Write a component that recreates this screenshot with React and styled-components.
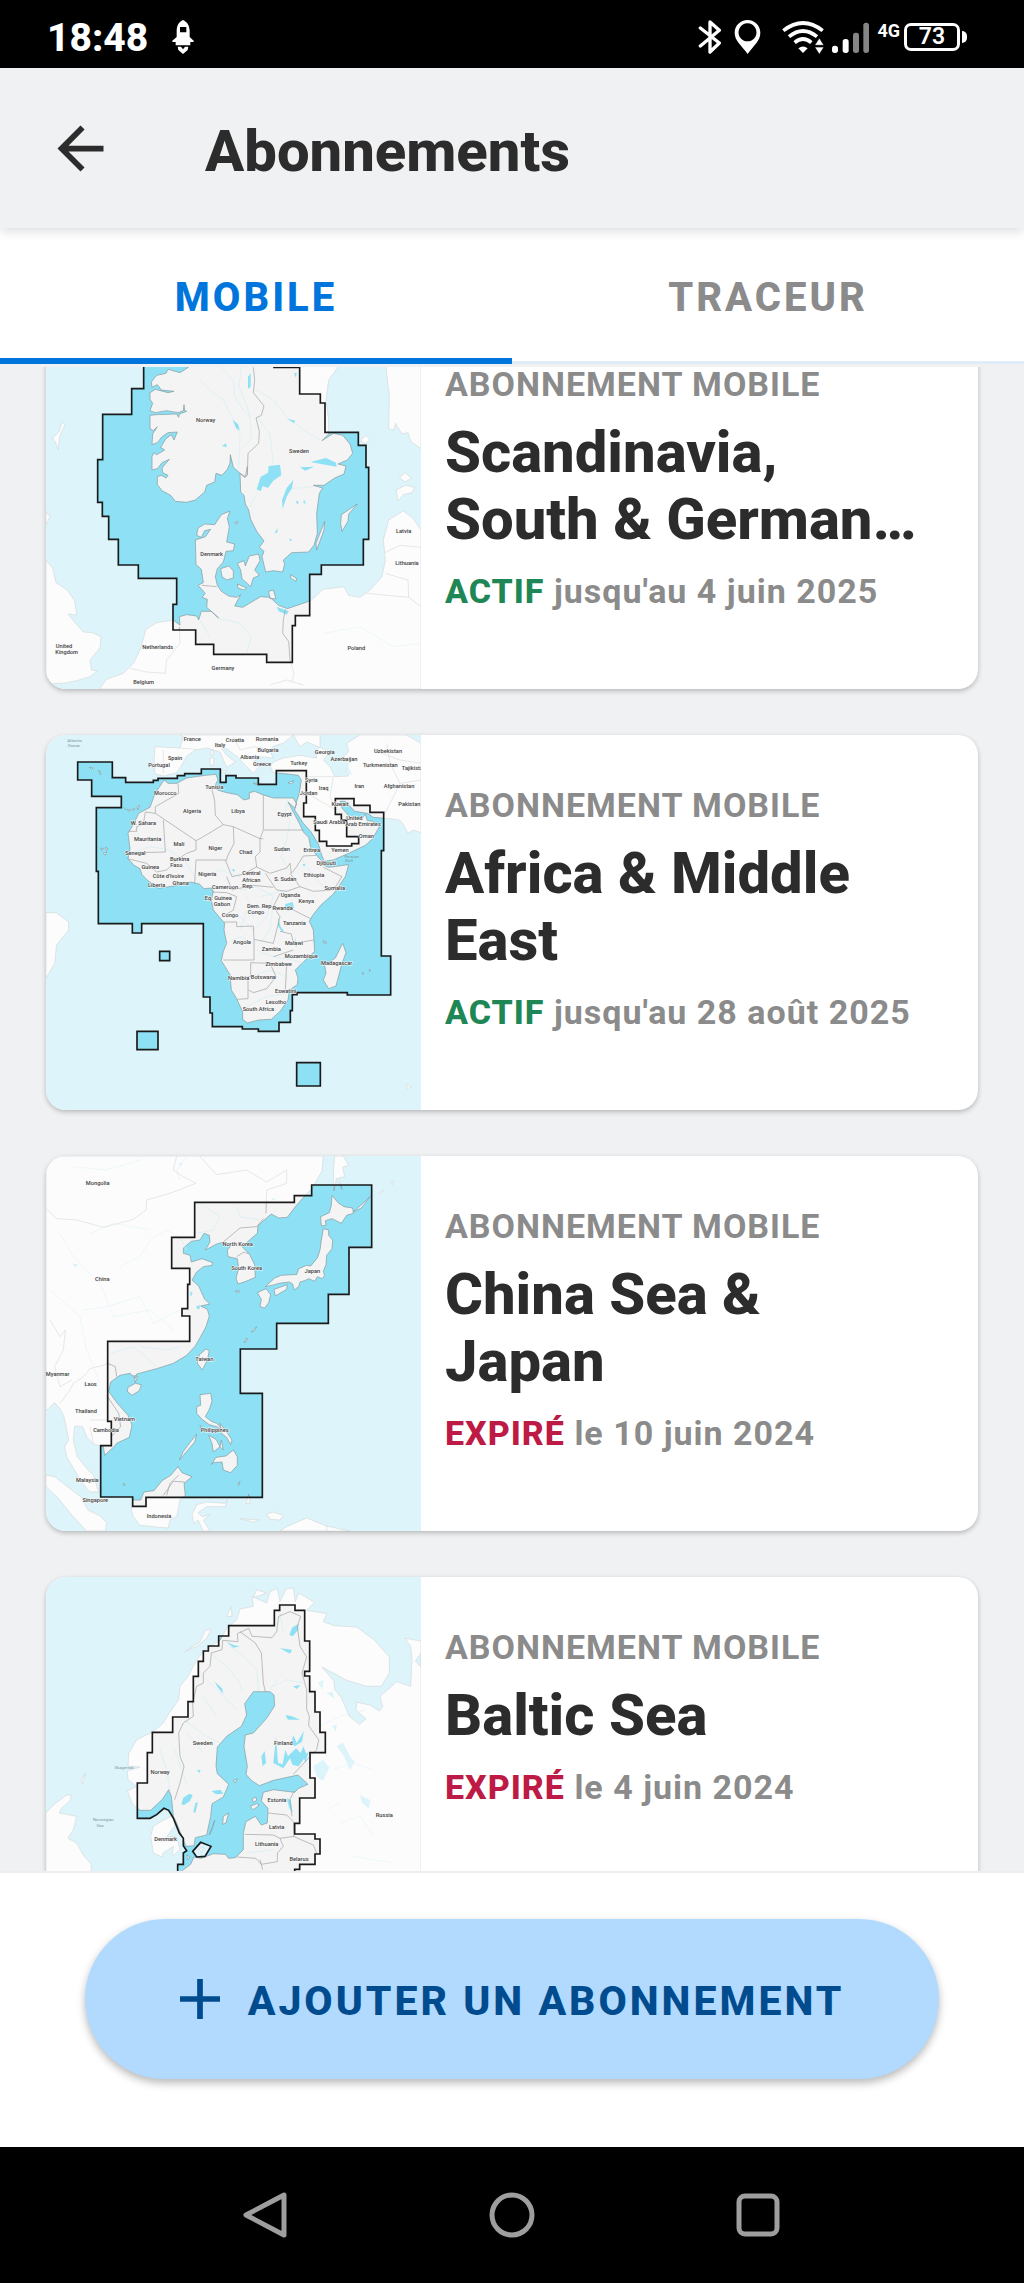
import React, { useLayoutEffect, useRef, useState } from "react";
import styled, { createGlobalStyle } from "styled-components";
import { MdArrowBack } from "react-icons/md";

const GlobalStyle = createGlobalStyle`
  * {
    box-sizing: border-box;
  }

  body {
    margin: 0;
    background: #f0f1f3;
    font-family: Roboto, "Noto Sans", sans-serif;
    color: #2c2c2c;
  }

  button {
    font: inherit;
    border: 0;
    padding: 0;
    background: none;
    cursor: pointer;
  }
`;

const Screen = styled.div`
  display: flex;
  flex-direction: column;
  height: 100vh;
`;

const StatusBar = styled.div`
  display: flex;
  flex: none;
  justify-content: space-between;
  align-items: center;
  height: 68px;
  padding: 6px 57px 0 47px;
  background: #000;
  color: #fff;

  svg {
    display: block;
    flex: none;
  }
`;

const StatusGroup = styled.div`
  display: flex;
  align-items: center;
  gap: ${(props) => props.$gap}px;
`;

const Time = styled.span`
  padding-top: 2px;
  font-size: 39px;
  line-height: 48px;
  font-weight: 800;
`;

const Network = styled.span`
  align-self: flex-start;
  font-size: 18px;
  line-height: 16px;
  font-weight: 700;
`;

const Battery = styled.div`
  display: flex;
  align-items: center;
  gap: 2px;
`;

const BatteryBody = styled.span`
  width: 56px;
  height: 28px;
  border: 3px solid #fff;
  border-radius: 7px;
  font-size: 23px;
  line-height: 22px;
  font-weight: 600;
  text-align: center;
`;

const BatteryTip = styled.span`
  width: 5px;
  height: 12px;
  border-radius: 0 6px 6px 0;
  background: #fff;
`;

const Header = styled.header`
  display: flex;
  flex: none;
  align-items: center;
  gap: 90px;
  height: 160px;
  padding: 0 46px;
  position: relative;
  background: #f0f1f3;
  box-shadow: 0 2px 12px rgba(0, 0, 0, 0.16);
`;

const BackButton = styled.button`
  color: #2c2c2c;

  svg {
    display: block;
  }
`;

const PageTitle = styled.h1`
  margin: 0;
  padding-top: 6px;
  font-size: 58px;
  line-height: 68px;
  font-weight: 800;
`;

const Tabs = styled.div`
  display: flex;
  flex: none;
  height: 136px;
  margin-bottom: 3px;
  background: #fff;
`;

const Tab = styled.button`
  flex: 1;
  padding-top: 2px;
  box-shadow: inset 0
    ${(props) => (props.$active ? "-6px #0076dd" : "-3px #e0edf8")};
  color: ${(props) => (props.$active ? "#0076dd" : "#8b8b8b")};
  font-size: 40px;
  font-weight: 800;
  letter-spacing: 3px;
`;

const List = styled.main`
  display: flex;
  flex: 1;
  flex-direction: column;
  gap: 46px;
  min-height: 0;
  padding: 46px;
  overflow-y: auto;
  scrollbar-width: none;
`;

const Card = styled.article`
  display: flex;
  flex: none;
  height: 375px;
  overflow: hidden;
  border-radius: 20px;
  background: #fff;
  box-shadow: 0 2px 5px rgba(0, 0, 0, 0.24);
`;

const MapPicture = styled.svg`
  display: block;
  flex: none;
  width: 375px;
  height: 375px;
  background: #ddf4fa;
`;

const MapLabel = styled.text`
  font-size: 17px;
  font-weight: 500;
  fill: #444;
  stroke: #f8f8f8;
  stroke-width: 3px;
  paint-order: stroke;
  text-anchor: middle;
`;

const SeaLabel = styled.text`
  font-size: 13px;
  fill: #7d959c;
  text-anchor: middle;
`;

const CardBody = styled.div`
  flex: 1;
  min-width: 0;
  padding: 50px 56px 0 24px;
`;

const Kind = styled.p`
  margin: 0 0 15px;
  color: #8b8b8b;
  font-size: 34px;
  line-height: 40px;
  font-weight: 700;
  letter-spacing: 1px;
  white-space: nowrap;
`;

const Name = styled.h2`
  margin: 0 0 18px;
  font-size: 58px;
  line-height: 67px;
  font-weight: 800;
`;

const Validity = styled.p`
  margin: 0;
  color: #8b8b8b;
  font-size: 34px;
  line-height: 40px;
  font-weight: 700;
  letter-spacing: 1px;
  white-space: nowrap;
`;

const State = styled.strong`
  color: ${(props) => (props.$expired ? "#bd1a45" : "#1f8656")};
  font-weight: 800;
`;

const Footer = styled.footer`
  flex: none;
  padding: 46px 85px 68px;
  border-top: 2px solid #eeeef2;
  background: #fff;
`;

const AddButton = styled.button`
  display: flex;
  justify-content: center;
  align-items: center;
  gap: 28px;
  width: 100%;
  height: 160px;
  border-radius: 80px;
  background: #b2daff;
  box-shadow: 0 4px 8px rgba(0, 0, 0, 0.28);
  color: #004c8f;
  font-size: 41px;
  font-weight: 800;
  letter-spacing: 3px;

  span {
    padding-top: 4px;
  }
`;

const NavBar = styled.nav`
  display: flex;
  flex: none;
  justify-content: center;
  align-items: center;
  height: 136px;
  background: #000;
`;

const NavButton = styled.button`
  flex: 0 0 24%;

  svg {
    display: block;
    margin: auto;
    fill: none;
    stroke: #9e9e9e;
    stroke-width: 5;
    stroke-linejoin: round;
  }
`;

// Each map is drawn on its own 1125 unit square.
const scandinavia = {
  viewBox: "18 -138 1125 1125",
  zone: "M311 -60V86H275V163H188V299H173V427H187V469H206V538H235V615H295V655H410V733H399V810H467V853H521V883H680V907H757V797H766V767H809V643H844V615H970V538H986V322H978V256H955V217H855V129H841V102H779V22H702V-60Z",
  land: [
    "M420 -138L405 10L445 22L420 38L384 28L378 40L350 46L334 66L336 82L352 74L364 90L402 94L384 98L346 88L330 98L330 118L338 130L330 152L346 158L380 152L414 158L430 152L432 134L434 152L440 154L418 162L416 172L410 162L350 164L330 166L330 206L340 212L352 200L338 222L336 254L352 248L366 230L384 218L412 216L402 240L394 224L378 236L362 262L374 270L350 284L342 278L336 290V330L352 326L366 308L388 298L366 324L368 338L384 346L378 354L364 346L352 350V374L366 392L392 406L406 424L440 427L466 420L494 396L500 376L524 366L528 340L546 346L562 328L570 310L571 284L580 322L600 340L615 353L622 345L622 320L616 350L600 340L602 396L612 406L616 432L626 450L632 478L650 514L672 543L658 562L672 574L666 590L677 636L700 632L728 636L734 612L730 600L755 578L806 576L822 556L832 520L830 460L838 400L848 384L820 376L852 376L884 354L912 342L918 318L894 312L922 300L938 280L930 252L908 226L880 220L846 242L866 222L866 180L858 120L866 60L895 20L900 -138Z",
    "M1030 -138L1040 40L1048 110L1046 206L1062 210L1066 190L1086 222L1104 218L1112 244L1143 266V-138Z",
    "M18 600L38 625L48 668L82 690L104 722L110 765L84 762L100 782L130 816L158 818L183 830L180 864L150 900L154 930L172 932L150 950L110 962L70 970L48 970L18 975Z",
    "M18 455L30 470L18 495ZM38 234L58 214L66 186L75 194L60 226L54 268L46 246Z",
    "M178 987L200 958L250 940L280 910L300 870L318 808L350 788L399 780L420 795L418 770L440 764L470 768L476 780L484 754L514 754L536 774L500 742L502 718L486 712L496 700L474 676L490 668L484 628L468 614L466 540L496 530L512 508L494 512L484 532L470 526L474 504L494 492L524 494L544 464L570 453L562 476L568 500L560 546L584 552L580 572L558 574L550 606L532 626L526 650L532 676L544 694L566 708L590 712L602 704L584 738L608 742L662 710L690 712L716 736L742 746L812 722L850 688L912 680L926 706L960 712L990 690L1026 650L1036 600L1030 540L1046 480L1090 453L1118 474L1143 510V987Z",
    "M542 626L566 618L580 632L580 654L560 660L546 650ZM592 610L612 602L616 618L628 588L656 582L660 602L644 630L658 646L640 654L632 680L606 656L602 630ZM592 672L620 684L612 690L594 684ZM686 694L700 690L708 716L690 716ZM752 644L770 656L768 664L752 654ZM904 464L952 432L926 462L924 484L906 514L902 490ZM854 484L852 510L830 570L828 550ZM584 488L594 484L590 492Z",
    "M1068 390L1096 376L1124 382L1116 398L1090 404L1074 424ZM1078 352L1096 338L1114 354L1096 366ZM962 240L980 226L990 240L974 252Z",
  ],
  lakes: [
    "M650 388L662 350L684 338L686 318L720 314L724 346L700 362L684 384L668 378L662 394ZM740 384L760 360L756 384L740 410L728 446L726 420ZM812 306L858 294L888 308L890 320L856 314L822 308ZM780 322L822 320L796 332ZM742 176L766 182L762 190ZM578 180L594 192L600 212L588 204ZM624 50L632 40V80L624 86ZM546 258L558 250L560 262ZM766 424L776 424L774 434ZM704 520L712 504L712 518ZM748 534L756 540L750 544ZM710 740L746 754L740 764L716 754ZM792 418L798 432L790 428ZM762 40L770 38L768 54Z",
  ],
  rivers:
    "M480 60L520 100L550 120L580 180L600 230L596 330M545 22L580 60L584 110L610 150L630 170L634 235L600 270M605 22L596 80L618 130L630 170M650 90L700 120L740 170L790 210L840 240M650 170L690 220L700 310M650 400L630 440M750 386L820 380M480 780L510 830M536 774L600 790L634 830L620 880M220 930L240 940M850 820L960 800L1060 860L1140 850",
  borders:
    "M640 22L644 60L640 98L672 138L664 166L648 174L658 214L656 250L624 280L622 345M486 676L530 680M736 748L730 780L728 820L746 844L750 900L762 940L756 965M690 975L740 960L790 975M418 800L420 850L380 900L376 940L320 936L270 925M1030 580L1080 556L1143 562M1036 640L1104 660L1106 712M980 700L1106 712L1143 740",
  labels: [
    [497, 186, "Norway"],
    [777, 278, "Sweden"],
    [515, 587, "Denmark"],
    [1091, 519, "Latvia"],
    [1101, 614, "Lithuania"],
    [72, 864, "United"],
    [80, 883, "Kingdom"],
    [353, 866, "Netherlands"],
    [949, 871, "Poland"],
    [549, 930, "Germany"],
    [311, 973, "Belgium"],
  ],
};

const africa = {
  viewBox: "18 15 1125 1125",
  zone: "M113 96H217V143H257V157H340V151H354V145H412V137H434V131H484V117H541V157H558V137H588V144H655V163H709V122H799V219H791V260H826V301H838V334H860V348H935V341H956V320H920V271H904V253H886V206H942V226H990V247H1031V362H1024V678H1052V795H922V788H771V794H757V842H751V877H717V904H655V897H607V890H517V849H510V801H490V581H305V609H277V581H175V424H169V233H244V199H155V150H113ZM359 664H389V692H359ZM291 904H354V959H291ZM770 998H841V1068H770Z",
  land: [
    "M372 150L384 160L410 160L440 144L496 136L528 133L534 150L526 164L532 180L560 188L592 194L612 210L628 206L628 188L644 184L668 194L700 204L730 204L760 204L770 222L764 234L744 216L762 250L778 280L790 306L806 322L812 352L830 376L846 394L846 404L866 412L926 404L916 440L880 492L842 526L818 556L808 574L820 600L824 664L792 694L766 720L774 744L772 764L748 780L744 810L722 842L694 868L656 870L622 879L608 868L608 846L590 806L574 780L570 734L544 692L550 664L560 640L552 600L554 580L520 540L514 510L520 484L514 474L492 476L478 462L452 456L400 468L356 475L324 452L306 434L300 416L282 406L264 386L270 356L264 310L282 280L296 250L330 232L340 204L352 180Z",
    "M775 136L784 150L778 190L770 214L764 240L790 280L812 304L836 344L844 372L852 394L880 390L930 368L976 346L998 326L1018 290L1000 274L982 272L976 252L964 268L930 262L906 234L900 214L916 214L944 244L982 250L1000 262L1050 266L1078 270L1090 284L1104 310L1120 300L1143 308V40L1100 15H960L920 40L926 64L912 80L922 100L918 124L926 138L884 140L870 110L850 90L870 66L840 52L826 60L830 84L780 76L730 84L700 96L690 110L700 128L744 132Z",
    "M345 50L420 54L430 20L420 15H760L730 40L700 48L690 66L700 84L660 80L640 96L656 112L640 130L620 110L596 84L560 56L540 48L560 76L586 96L560 112L540 66L500 54L466 60L440 78L424 108L410 128L372 138L345 132L342 90Z",
    "M760 15L780 50L800 36L840 52L840 15Z",
    "M18 548L48 548L86 576L86 600L50 644L44 700L18 745Z",
    "M908 640L918 668L906 700L888 768L866 776L850 750L858 730L854 706L886 684Z",
    "M512 62L520 60L518 76L510 74ZM510 84L522 84L520 106L510 106ZM540 122L558 120L556 130ZM744 158L762 152L754 162ZM640 160L664 160L656 166ZM1100 1062L1114 1070L1102 1076Z",
    "M148 112L160 114L154 118ZM176 120L184 132L180 134ZM252 232L258 240M262 238L272 240L266 244ZM276 238L284 236L280 242ZM290 232L298 226L294 240ZM182 354L190 356L186 362ZM196 352L204 356L200 362ZM190 370L200 366L196 376ZM850 632L860 638L852 640ZM966 728L972 730L968 734ZM988 718L992 722L988 724Z",
  ],
  lakes: [
    "M736 522L758 516L762 534L744 544L734 534ZM714 560L722 590L732 604L726 606L714 588ZM764 620L772 646L768 652ZM788 402L796 402L792 412ZM576 416L586 420L580 426ZM918 92L930 88L926 110L936 134L922 132Z",
  ],
  rivers:
    "M742 208L736 250L750 270L740 330L724 380L746 420M270 370L330 350L390 360L440 400L470 450M500 440L540 420L600 440M600 480L650 470L700 500L680 560L640 600L600 560L560 560M620 500L640 560M700 520L690 600L660 640M650 660L700 680L760 690L790 700M560 640L600 620L640 640M630 740L690 720L740 740M620 830L680 800L740 790M780 380L820 440L860 480M660 500L740 480M600 600L620 540",
  borders:
    "M414 160L416 190L346 230V250L316 246L310 282L290 290V304H266M346 250L468 332L468 360L440 370L410 390L380 420L350 426L320 400L262 386M370 270L376 366L300 368M468 332L480 326L550 284L526 256L524 212L516 180L530 164M550 284L580 290L660 326L670 300V196M672 300H790M580 290L582 340L562 380L560 390L468 390M670 326H660V366L646 380L650 410L612 432L576 440L556 390M468 390L464 460M648 410L690 430L740 414L750 400L754 430L770 410L790 378L830 376M750 430L780 470L820 484L880 480L906 440L850 412M676 430L710 480L740 484L780 470M560 440L576 480L640 466L700 472M516 486L560 488L590 500L580 540L548 560M552 576H590V590L640 588L642 628L700 640L710 600L720 560L700 530L720 490M760 540L812 566M720 604L754 612L760 640L822 630M642 628V690L550 690M632 698V740H624V806L592 808M632 698L690 700L708 740L680 776L640 788L626 780M700 680L760 660M740 700L736 780M800 140L880 140L870 200L888 240L800 190M1040 40L1050 100L1080 160L1060 200L1030 260M1000 60L1080 90L1143 100M1080 160L1143 150M580 20L600 60L640 50L700 60M420 54L470 58M370 60V130",
  labels: [
    [457, 32, "France"],
    [585, 35, "Croatia"],
    [681, 34, "Romania"],
    [540, 50, "Italy"],
    [684, 66, "Bulgaria"],
    [405, 90, "Spain"],
    [629, 86, "Albania"],
    [357, 111, "Portugal"],
    [666, 108, "Greece"],
    [776, 105, "Turkey"],
    [854, 71, "Georgia"],
    [1044, 70, "Uzbekistan"],
    [912, 93, "Azerbaijan"],
    [1021, 111, "Turkmenistan"],
    [1122, 120, "Tajikistan"],
    [814, 156, "Syria"],
    [851, 181, "Iraq"],
    [958, 175, "Iran"],
    [1077, 173, "Afghanistan"],
    [1108, 229, "Pakistan"],
    [806, 194, "Jordan"],
    [900, 228, "Kuwait"],
    [868, 283, "Saudi Arabia"],
    [943, 270, "United"],
    [969, 288, "Arab Emirates"],
    [979, 325, "Oman"],
    [900, 366, "Yemen"],
    [376, 194, "Morocco"],
    [523, 177, "Tunisia"],
    [456, 248, "Algeria"],
    [594, 248, "Libya"],
    [734, 257, "Egypt"],
    [310, 284, "W. Sahara"],
    [323, 333, "Mauritania"],
    [417, 347, "Mali"],
    [526, 359, "Niger"],
    [617, 373, "Chad"],
    [726, 364, "Sudan"],
    [815, 365, "Eritrea"],
    [286, 376, "Senegal"],
    [859, 405, "Djibouti"],
    [419, 392, "Burkina"],
    [409, 411, "Faso"],
    [331, 416, "Guinea"],
    [385, 443, "Côte d'Ivoire"],
    [502, 437, "Nigeria"],
    [350, 470, "Liberia"],
    [422, 464, "Ghana"],
    [634, 436, "Central"],
    [634, 455, "African"],
    [624, 475, "Rep."],
    [736, 454, "S. Sudan"],
    [822, 440, "Ethiopia"],
    [555, 476, "Cameroon"],
    [884, 481, "Somalia"],
    [535, 510, "Eq. Guinea"],
    [546, 529, "Gabon"],
    [751, 500, "Uganda"],
    [799, 519, "Kenya"],
    [660, 534, "Dem. Rep."],
    [648, 553, "Congo"],
    [728, 539, "Rwanda"],
    [570, 562, "Congo"],
    [763, 586, "Tanzania"],
    [606, 643, "Angola"],
    [762, 645, "Malawi"],
    [694, 663, "Zambia"],
    [784, 685, "Mozambique"],
    [716, 708, "Zimbabwe"],
    [890, 706, "Madagascar"],
    [596, 751, "Namibia"],
    [670, 746, "Botswana"],
    [737, 788, "Eswatini"],
    [708, 822, "Lesotho"],
    [655, 844, "South Africa"],
  ],
  seaLabels: [
    [104, 36, "Atlantic"],
    [102, 51, "Ocean"],
    [935, 383, "Persian"],
    [927, 397, "Gulf"],
  ],
};

const chinaSea = {
  viewBox: "18 18 1125 1125",
  zone: "M464 157H763V137H815V105H995V292H927V433H865V520H710V597H601V730H667V1042H318V1069H278V1041H182V887H214V814H203V574H449V498H426V476H443V403H449V355H395V262H464Z",
  land: [
    "M18 18H850L846 62L820 110L796 136L766 170L742 202L716 204L694 192L670 212L654 228L652 250L622 276L604 288L628 312L644 344L646 382L618 394L594 402L588 384L596 356L592 326L564 320L562 300L574 286L552 276L530 282L496 300L510 276L508 256L492 250L480 270L454 274L430 294L430 310L450 316L454 336L486 326L518 338L516 346L490 350L470 366L456 390L476 408L494 448L510 462L482 468L502 478L508 498L498 530L482 560L466 588L440 616L400 640L350 656L290 672L286 684L270 670L240 676L212 696L206 724L232 760L264 796L276 826L268 862L230 880L222 890L194 916L190 890L160 882L140 860L128 830L104 828L100 870L112 920L136 950L160 976L176 1026L150 1026L124 996L100 954L80 920L74 890L86 870L72 800L60 776L44 758L18 782Z",
    "M18 975L44 980L90 1016L124 1042L144 1080L180 1098L200 1118L196 1143H140L96 1096L56 1046L18 1010Z",
    "M278 1050L302 1050L312 1026L342 1022L366 992L392 976L414 950L426 968L456 980L432 1000L436 1036L420 1050L410 1100L390 1110L384 1134L340 1130L300 1126L280 1100L274 1080Z",
    "M850 236L866 240L866 256L878 270L876 296L860 316L858 344L850 364L854 376L846 386L832 380L824 394L806 386L794 392L780 396L776 410L762 420L758 402L748 396L716 400L704 404L676 410L704 384L724 376L756 374L770 374L776 356L800 346L812 348L832 324L840 300L844 270Z",
    "M876 136L894 158L912 170L938 174L940 190L920 196L904 220L876 206L856 212L858 226L844 228L842 200L868 188L874 166Z",
    "M652 428L678 416L692 434L686 458L674 474L660 470L664 448ZM702 418L742 404L740 418L706 438ZM586 424L598 422L596 428ZM498 597L508 602L502 630L487 660L472 640L478 614ZM264 712L286 700L304 704L298 722L276 736L262 724ZM282 676L292 680L286 698Z",
    "M480 734L512 730L516 754L508 778L496 800L514 814L530 820L550 840L530 830L508 824L486 808L470 790L470 770L482 766ZM506 856L528 868L540 890L520 906L516 880ZM540 820L560 846L576 870L572 884L560 862L544 850ZM514 944L528 922L558 918L580 900L592 920L592 946L572 968L550 960L546 936L520 938ZM470 852L464 876L418 930L430 904ZM480 826L494 840L484 838ZM544 870L550 900L540 890Z",
    "M884 18H910L926 46L908 52L914 80L896 84L906 118L890 84L882 122L880 60Z",
    "M470 1064L500 1056L556 1060L562 1048L556 1070L500 1070L474 1088L486 1100L510 1094L490 1110L510 1143H490L474 1110L462 1120L456 1094ZM626 1032L630 1060L618 1060ZM600 1106L660 1110L640 1116ZM680 1092L700 1086L730 1096L720 1110L690 1108ZM740 1130L800 1104L860 1128L930 1143H720Z",
    "M1018 130L1030 118L1024 132ZM1054 98L1062 94L1058 104ZM940 186L960 168L984 146L990 140L964 174ZM612 578L620 564L622 572ZM634 546L650 530L644 542ZM594 1000L600 994L596 1006ZM250 1000L256 1004L252 1008Z",
  ],
  lakes: [
    "M96 340L116 344L106 352ZM470 468L480 466L478 478L470 476ZM450 424L458 430L452 440ZM692 146L706 144L704 152ZM416 40L430 36L420 52Z",
  ],
  rivers:
    "M240 350L300 320L330 270L380 240L420 262L440 300M130 480L200 470L300 440L340 520L420 480M60 250L100 320L180 400L220 500L330 480L400 540M30 420L120 500L140 600L180 700M480 160L540 200L520 240L470 250M590 170L600 200L660 210M210 610L280 590L330 630L350 650M300 590L380 600L420 590M150 250L220 220L330 240M440 20L410 60L420 90M300 30L200 60L100 50",
  borders:
    "M18 176L50 206L110 210L192 232L280 208L318 180L320 150L390 130L468 100L430 80L400 60L410 18M480 20L530 74L620 60L680 96L740 60L740 100L680 120L678 190M552 274L600 234L650 230L670 206M590 320L612 306L626 312M203 640L190 646L150 656L130 680L100 700L90 720L60 760M203 640L226 650L230 680M203 740L236 790L242 830L214 860M150 810L200 810M150 830L160 880M30 510L60 560L76 540L70 600L44 650L60 710L96 690M370 1036L400 994L434 996M380 1036L390 1000L416 976M860 1124V1143",
  labels: [
    [173, 106, "Mongolia"],
    [187, 393, "China"],
    [593, 288, "North Korea"],
    [620, 360, "South Korea"],
    [817, 368, "Japan"],
    [493, 634, "Taiwan"],
    [53, 677, "Myanmar"],
    [152, 708, "Laos"],
    [138, 790, "Thailand"],
    [253, 813, "Vietnam"],
    [198, 846, "Cambodia"],
    [524, 846, "Philippines"],
    [142, 997, "Malaysia"],
    [166, 1056, "Singapore"],
    [357, 1104, "Indonesia"],
  ],
};

const baltic = {
  viewBox: "18 22 1125 1125",
  zone: "M719 106H765V122H794V214H809V305H794V319H809V366H825V427H840V488H856V549H810V625H825V685H779V761H764V793H825V808H840V853H825V884H779V899H764V960H413V884H430V850L440 843L430 828L430 806L418 790L400 745L386 722L372 716L350 735L330 746H292V640H322V549H337V488H398V442H444V396H460V320H475V275H490V244H505V229H536V199H566V168H703V122H719ZM482 818L513 830L495 860L470 862L458 845Z",
  land: [
    "M300 722L278 704L262 664L290 650L264 630L262 604L300 592L264 590L266 552L290 510L336 488L368 462L388 430L416 390L420 350L444 320L470 270L500 236L540 212L560 176L590 150L600 118L640 110L636 80L680 100L690 66L712 56L720 96L738 58L760 54L766 96L776 70L824 98L800 122L860 132L850 156L882 168L950 172L1002 210L1048 262L1048 310L1024 350L980 350L920 332L880 310L846 292L882 334L884 360L904 384L928 440L958 464L978 448L948 420L950 398L990 406L1018 424L1028 410L1020 380L1070 336L1112 350L1116 270L1112 230L1095 206L1143 214V1147H400L380 1000L400 930L430 900L452 884L462 862L484 866L520 852L556 854L566 866L586 864L610 840L610 790L618 756L646 740L664 766L682 760L684 716L664 694L670 668L700 660L764 668L776 656L804 644L774 616L700 632L658 648L634 632L618 614L622 590L612 530L616 496L640 490L680 446L704 408L702 376L690 366H640L614 402L620 436L604 470L560 500L532 532L528 590L532 612L566 644L550 682L516 702L512 740L500 796L466 804L462 828L438 830L424 796L410 760L400 740L394 680L386 660L368 688L332 722Z",
    "M398 738L404 770L380 800L410 802L420 840L396 860L400 830L370 850L366 862L340 850L332 800L340 770L370 752Z",
    "M40 706L80 676L94 676L90 694L64 716L58 730L110 740L100 780L84 806L110 820L130 856L154 884L150 960H18V730Z",
    "M434 246L480 216L496 182L514 178L500 206L470 230ZM560 140L574 110L576 140ZM650 60L680 70L640 84ZM124 632L136 610L128 644ZM550 740L566 730L558 760L548 764ZM524 752L518 774L508 796ZM630 710L650 702L658 706L640 720ZM636 688L648 682L650 692L640 698ZM580 632L592 628L586 640ZM440 856L450 862L444 870Z",
    "M476 838L490 832L486 848Z",
    "M1143 250L1126 274L1143 292Z",
  ],
  lakes: [
    "M424 704L430 684L448 672L458 676L450 694L432 706ZM460 726L466 700L474 698L466 730ZM748 196L756 174L776 162L774 182L758 200ZM720 236L756 240L750 252ZM514 664L542 660L550 672L528 674ZM740 686L752 690L758 730L748 716ZM524 336L546 356L550 374L534 354ZM736 436L756 440L780 450L744 450ZM700 580L708 500L714 580L728 584L736 540L744 560L768 536L782 550L790 530L800 556L776 590L758 586L750 566L730 596ZM754 520L760 496L770 520L792 484L786 516L764 530ZM664 560L674 544L678 580L668 590ZM790 560L806 546L796 580ZM560 216L580 226L600 230L580 234ZM470 600L482 602L478 610ZM760 350L782 346L770 358Z",
    "M820 590L850 570L868 594L848 634L830 620ZM890 530L908 518L930 560L944 576L930 602L912 560ZM960 676L992 692L986 716L966 700ZM834 340L850 330L848 360ZM860 370L878 366L884 388ZM876 470L890 464L888 486Z",
  ],
  rivers:
    "M510 250L560 290L600 340L606 366M560 220L620 270L650 300L656 364M500 330L560 390L590 420M490 380L530 440M430 450L500 500L540 520M440 490L490 550M720 130L730 190M700 350L740 330L790 340M690 360L710 330M360 540L380 600L390 660M400 530L440 640M620 850L700 840M840 470L900 440L980 420M880 600L940 580L1000 600M900 760L960 740L1000 800M940 860L1060 880M860 720L900 700",
  borders:
    "M626 176L636 200L696 204L710 186L716 140L750 126L782 140L772 170L780 230L800 262L786 310L800 360L800 420L808 440L806 468L836 510L830 540L760 614M626 176L592 192L594 216L548 212L546 240L514 250L510 290L490 310L490 340L470 350L458 400L460 440L430 460L416 490L420 560L432 590L420 640L404 690M600 186L646 220L664 250L670 340L676 366M762 664L750 690L756 740M684 730L740 736L760 756L762 800L720 806L700 796L614 794M760 800L820 826L830 850M720 806L730 830L712 850L712 876L664 884L648 866L590 862M660 870L668 900",
  labels: [
    [488, 526, "Sweden"],
    [730, 526, "Finland"],
    [360, 614, "Norway"],
    [711, 697, "Estonia"],
    [1033, 742, "Russia"],
    [710, 777, "Latvia"],
    [377, 813, "Denmark"],
    [680, 830, "Lithuania"],
    [777, 873, "Belarus"],
  ],
  seaLabels: [
    [252, 599, "Skagerrak"],
    [190, 755, "Norwegian"],
    [180, 771, "Sea"],
  ],
};

const subscriptions = [
  {
    id: "scandinavia",
    name: "Scandinavia, South & German…",
    until: "jusqu'au 4 juin 2025",
    map: scandinavia,
  },
  {
    id: "africa",
    name: "Africa & Middle East",
    until: "jusqu'au 28 août 2025",
    map: africa,
  },
  {
    id: "china-sea",
    name: "China Sea & Japan",
    until: "le 10 juin 2024",
    expired: true,
    map: chinaSea,
  },
  {
    id: "baltic",
    name: "Baltic Sea",
    until: "le 4 juin 2024",
    expired: true,
    map: baltic,
  },
];

const ZoneMap = ({ id, map }) => {
  const land = map.land.join("");
  const lakes = map.lakes.join("");

  return (
    <MapPicture viewBox={map.viewBox} role="img" aria-label={id}>
      <clipPath id={`zone-${id}`}>
        <path d={map.zone} clipRule="evenodd" />
      </clipPath>
      <path d={land} fill="#fcfcfc" stroke="#d3d9db" strokeWidth="2" />
      <path d={lakes} fill="#ddf4fa" />
      <path d={map.rivers} fill="none" stroke="#e6f4f8" strokeWidth="2" />
      <path d={map.borders} fill="none" stroke="#dcdcdc" strokeWidth="2" />
      <g clipPath={`url(#zone-${id})`}>
        <path d={map.zone} fill="#8ee1f4" />
        <path d={land} fill="#f4f4f4" stroke="#85979c" strokeWidth="2" />
        <path d={map.rivers} fill="none" stroke="#d3eef5" strokeWidth="2" />
        <path d={lakes} fill="#8ee1f4" />
        <path d={map.borders} fill="none" stroke="#a0a0a0" strokeWidth="2" />
      </g>
      <path d={map.zone} fill="none" stroke="#1a1a1a" strokeWidth="5" />
      {map.labels.map(([x, y, label]) => (
        <MapLabel key={`${label}-${y}`} x={x} y={y}>
          {label}
        </MapLabel>
      ))}
      {map.seaLabels?.map(([x, y, label]) => (
        <SeaLabel key={label} x={x} y={y}>
          {label}
        </SeaLabel>
      ))}
    </MapPicture>
  );
};

const PhoneStatus = () => (
  <StatusBar>
    <StatusGroup $gap={24}>
      <Time>18:48</Time>
      <svg width="22" height="34" viewBox="517 59 66 102" fill="#fff">
        <path
          fillRule="evenodd"
          d="M550 59C538 64 531 76 531 92V110L518 121V125H528V135H572V125H582V121L570 110V92C570 76 562 64 550 59ZM541 80H560V96H541Z"
        />
        <path d="M534 139H544L550 147L556 139H566L564 149L550 161L536 149Z" />
      </svg>
    </StatusGroup>
    <StatusGroup $gap={8}>
      <svg width="24" height="34" viewBox="563 60 72 102">
        <path
          d="M570 84L627 129L599 156V66L627 91L570 138"
          fill="none"
          stroke="#fff"
          strokeWidth="10"
          strokeLinecap="round"
          strokeLinejoin="round"
        />
      </svg>
      <svg width="36" height="34" viewBox="657 60 108 102" fill="#fff">
        <path
          fillRule="evenodd"
          d="M710 60C688 60 671 77 671 98C671 122 690 134 710 162C730 134 748 122 748 98C748 77 731 60 710 60ZM710 70A27 27 0 1 1 709 70Z"
        />
      </svg>
      <svg width="50" height="34" viewBox="780 60 150 102">
        <g fill="none" stroke="#fff" strokeWidth="11">
          <path d="M808 92Q867 46 926 92" />
          <path d="M825 110Q867 76 909 110" />
          <path d="M842 128Q867 106 892 128" />
        </g>
        <path d="M853 145Q867 134 881 145L867 159Z" fill="#fff" />
        <path
          d="M902 136L916 114L930 136ZM902 141H930L916 163Z"
          fill="#fff"
          stroke="#000"
          strokeWidth="2"
        />
      </svg>
      <svg width="37" height="34" viewBox="963 60 111 102" fill="#fff">
        <rect x="963" y="137" width="18" height="22" rx="8" />
        <rect x="995" y="117" width="18" height="42" rx="8" />
        <rect x="1026" y="98" width="18" height="61" rx="8" fill="#858585" />
        <rect x="1057" y="68" width="17" height="91" rx="8" fill="#858585" />
      </svg>
      <StatusGroup $gap={4}>
        <Network>4G</Network>
        <Battery>
          <BatteryBody>73</BatteryBody>
          <BatteryTip />
        </Battery>
      </StatusGroup>
    </StatusGroup>
  </StatusBar>
);

const SubscriptionCard = ({ subscription }) => {
  const { id, name, until, expired, map } = subscription;

  return (
    <Card>
      <ZoneMap id={id} map={map} />
      <CardBody>
        <Kind>ABONNEMENT MOBILE</Kind>
        <Name>{name}</Name>
        <Validity>
          <State $expired={expired}>{expired ? "EXPIRÉ" : "ACTIF"}</State>{" "}
          {until}
        </Validity>
      </CardBody>
    </Card>
  );
};

const PhoneNav = () => (
  <NavBar>
    <NavButton aria-label="Retour">
      <svg width="48" height="48" viewBox="0 0 48 48">
        <path d="M42 4V44L4 24Z" />
      </svg>
    </NavButton>
    <NavButton aria-label="Accueil">
      <svg width="48" height="48" viewBox="0 0 48 48">
        <circle cx="24" cy="24" r="20" />
      </svg>
    </NavButton>
    <NavButton aria-label="Applications récentes">
      <svg width="48" height="48" viewBox="0 0 48 48">
        <rect x="5" y="5" width="38" height="38" rx="6" />
      </svg>
    </NavButton>
  </NavBar>
);

const App = () => {
  const [tab, setTab] = useState("mobile");
  const listRef = useRef(null);

  // open the list a little way down, past the top of the first card
  useLayoutEffect(() => {
    listRef.current.scrollTop = 99;
  }, []);

  return (
    <Screen>
      <GlobalStyle />
      <PhoneStatus />
      <Header>
        <BackButton aria-label="Retour">
          <MdArrowBack size={69} />
        </BackButton>
        <PageTitle>Abonnements</PageTitle>
      </Header>
      <Tabs role="tablist">
        <Tab
          role="tab"
          aria-selected={tab === "mobile"}
          $active={tab === "mobile"}
          onClick={() => setTab("mobile")}
        >
          MOBILE
        </Tab>
        <Tab
          role="tab"
          aria-selected={tab === "traceur"}
          $active={tab === "traceur"}
          onClick={() => setTab("traceur")}
        >
          TRACEUR
        </Tab>
      </Tabs>
      <List ref={listRef}>
        {subscriptions.map((subscription) => (
          <SubscriptionCard key={subscription.id} subscription={subscription} />
        ))}
      </List>
      <Footer>
        <AddButton>
          <svg width="40" height="40" viewBox="0 0 14 14" fill="currentColor">
            <path d="M14 8H8v6H6V8H0V6h6V0h2v6h6z" />
          </svg>
          <span>AJOUTER UN ABONNEMENT</span>
        </AddButton>
      </Footer>
      <PhoneNav />
    </Screen>
  );
};

export default App;
